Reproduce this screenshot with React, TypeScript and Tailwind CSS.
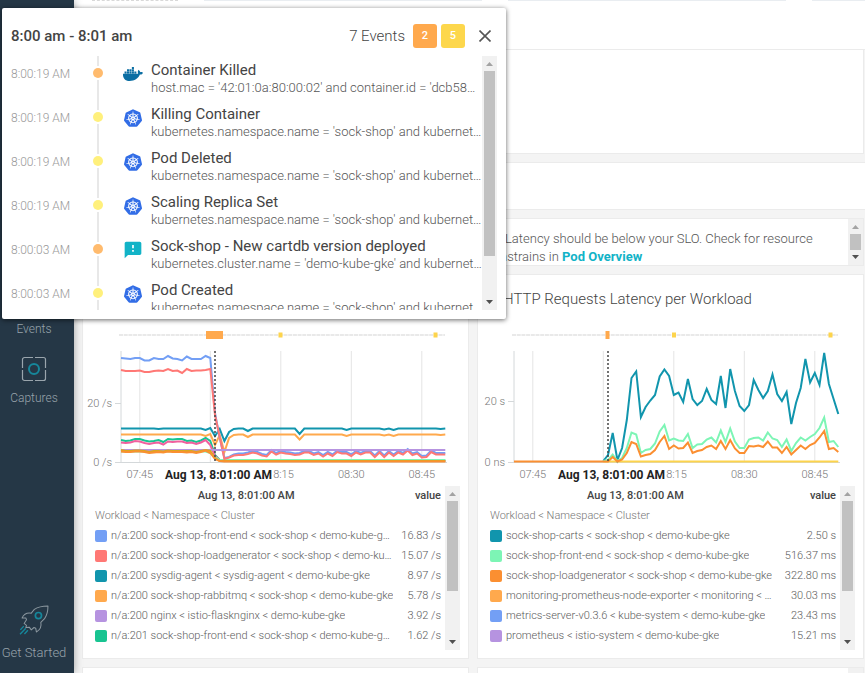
import clsx from "clsx"
import type { ReactNode } from "react"
import { FaDocker } from "react-icons/fa"
import { MdFeedback } from "react-icons/md"
import { SiKubernetes } from "react-icons/si"

type EventItem = {
  time: string
  severity: "high" | "medium"
  source: "docker" | "kubernetes" | "custom"
  title: string
  scope: string
}

type Series = { color: string; points: number[]; start?: number }

type LegendRow = { color: string; name: string; value: string }

const K8S_SCOPE = "kubernetes.namespace.name = 'sock-shop' and kubernet…"

const events: EventItem[] = [
  {
    time: "8:00:19 AM",
    severity: "high",
    source: "docker",
    title: "Container Killed",
    scope: "host.mac = '42:01:0a:80:00:02' and container.id = 'dcb58…",
  },
  { time: "8:00:19 AM", severity: "medium", source: "kubernetes", title: "Killing Container", scope: K8S_SCOPE },
  { time: "8:00:19 AM", severity: "medium", source: "kubernetes", title: "Pod Deleted", scope: K8S_SCOPE },
  { time: "8:00:19 AM", severity: "medium", source: "kubernetes", title: "Scaling Replica Set", scope: K8S_SCOPE },
  {
    time: "8:00:03 AM",
    severity: "high",
    source: "custom",
    title: "Sock-shop - New cartdb version deployed",
    scope: "kubernetes.cluster.name = 'demo-kube-gke' and kubernet…",
  },
  { time: "8:00:03 AM", severity: "medium", source: "kubernetes", title: "Pod Created", scope: K8S_SCOPE },
]

const flat = (value: number, count: number): number[] => Array(count).fill(value)

const tail = [
  130, 130, 129, 127.5, 128.5, 130.5, 131.5, 126.5, 129.5, 127.5, 128.5, 129, 130, 129.5, 127.5,
  127.5, 130, 128.5, 131.5, 128.5, 131, 127, 128.5, 128.5, 131, 127.5, 129.5, 127.5, 127.5, 132,
  127.5, 132, 127.5, 131, 127.5, 129.5, 125.5, 130, 128.5, 132.5, 132, 127, 129.5, 129.5, 129.5,
]

const dips = (base: number, values: Record<number, number>) =>
  flat(base, 70).map((v, i) => values[i] ?? v)

const requestSeries: Series[] = [
  {
    color: "#18c491",
    points: [
      115, 116, 115.5, 114, 114, 115.5, 116.5, 116, 115, 117, 114, 114.5, 114, 114, 116, 115.5, 117,
      115.5, 113, 116, 130, 135, ...flat(135.5, 21), 135, ...flat(135.5, 26),
    ],
  },
  {
    color: "#f0609e",
    points: [
      117.5, 118, 117.5, 116, 116.5, 118, 119, 118, 117.5, 119.5, 116.5, 117, 116.5, 116.5, 118,
      117.5, 119, 117.5, 115, 120, 131, 135, ...flat(136, 48),
    ],
  },
  {
    color: "#7df5b5",
    points: [...flat(126.5, 19), 128, 132, 135, ...flat(135, 48)],
  },
  {
    color: "#ffa94d",
    points: dips(109.5, { 18: 111, 19: 109, 20: 120, 21: 110, 22: 127, 23: 113, 24: 110, 27: 112, 38: 114.5, 48: 111, 56: 110.5, 58: 111, 68: 110 }),
  },
  {
    color: "#1195ad",
    points: dips(103.5, { 8: 104, 18: 105, 19: 103, 20: 111, 21: 104, 22: 116, 23: 107, 24: 104, 27: 106, 38: 109, 48: 105, 56: 104.5, 58: 105, 68: 104 }),
  },
  {
    color: "#739ff5",
    points: [
      33, 33.5, 34, 33, 33, 35.5, 35.5, 33, 34, 34, 31, 33.5, 34, 35.5, 31.5, 34, 34, 34, 31, 33, 88,
      113, 133, 132, 129.5, ...tail.map((v) => v - 1.5),
    ],
  },
  {
    color: "#ff7875",
    points: [
      45, 46, 46, 46, 45.5, 47, 47, 46, 45.5, 46, 44, 46, 45.5, 48, 44, 46, 45.5, 45.5, 45, 44, 90,
      112, 134, 132.5, 130.5, ...tail,
    ],
  },
  { color: "#b693e0", points: flat(125, 70) },
  {
    color: "#d9a81f",
    points: [
      125, 126, 126, 125.5, 125.5, 126, 127, 126, 126, 126.5, 125.5, 126, 126, 126, 126, 126, 127,
      126, 125, 126, 133, 136, ...flat(136, 48),
    ],
  },
  {
    color: "#fb8f31",
    points: [
      126.5, 127, 127, 126.5, 126.5, 127, 128, 127.5, 127, 127.5, 126.5, 127, 127, 127, 127.5, 127,
      128, 127, 125.5, 128, 134, 136, ...flat(136.5, 48),
    ],
  },
]

const latencySeries: Series[] = [
  { color: "#fdd44c", start: 19, points: flat(136.5, 51) },
  {
    color: "#1195ad",
    start: 19,
    points: [
      136, 130, 108, 135, 123, 95, 53, 46.5, 92, 82, 75.5, 70, 51.5, 44.5, 51, 70, 67.5, 77, 54, 74,
      80, 76, 64, 75, 79, 51, 83, 44, 66, 81, 86, 80, 55, 65, 73, 66, 49.5, 69, 76, 67, 99, 78, 63,
      34, 57.5, 48, 60, 28, 59, 74, 89,
    ],
  },
  {
    color: "#7df5b5",
    start: 19,
    points: [
      136, 135, 129.5, 136, 133, 123, 107.5, 109.5, 128, 125, 124, 118.5, 106.5, 100, 115.5, 113.5,
      115.5, 116, 109, 123, 119.5, 119, 114.5, 112.5, 117.5, 105.5, 117, 103.5, 116.5, 123, 123,
      114.5, 113, 112.5, 115.5, 107.5, 113.5, 115, 122, 114.5, 126, 118, 112.5, 115.5, 112, 109,
      103, 92.5, 117, 116, 122,
    ],
  },
  {
    color: "#fb8f31",
    points: [
      ...flat(136.5, 21), 132, 136.5, 134.5, 128, 117, 119, 131.5, 130, 129, 125, 117, 111, 124,
      120.5, 123.5, 123, 117.5, 128, 126, 125, 122, 120.5, 124, 116, 124, 115, 123.5, 128, 128, 121,
      121.5, 120.5, 122, 116.5, 122.5, 122.5, 128, 122, 129.5, 125, 120.5, 124, 120, 118, 112.5,
      106, 124, 123, 127,
    ],
  },
]

const requestLegend: LegendRow[] = [
  { color: "bg-[#739ff5]", name: "n/a:200 sock-shop-front-end < sock-shop < demo-kube-g…", value: "16.83 /s" },
  { color: "bg-[#ff7875]", name: "n/a:200 sock-shop-loadgenerator < sock-shop < demo-ku…", value: "15.07 /s" },
  { color: "bg-[#1195ad]", name: "n/a:200 sysdig-agent < sysdig-agent < demo-kube-gke", value: "8.97 /s" },
  { color: "bg-[#ffa94d]", name: "n/a:200 sock-shop-rabbitmq < sock-shop < demo-kube-gke", value: "5.78 /s" },
  { color: "bg-[#b693e0]", name: "n/a:200 nginx < istio-flasknginx < demo-kube-gke", value: "3.92 /s" },
  { color: "bg-[#18c491]", name: "n/a:201 sock-shop-front-end < sock-shop < demo-kube-g…", value: "1.62 /s" },
]

const latencyLegend: LegendRow[] = [
  { color: "bg-[#1195ad]", name: "sock-shop-carts < sock-shop < demo-kube-gke", value: "2.50 s" },
  { color: "bg-[#7df5b5]", name: "sock-shop-front-end < sock-shop < demo-kube-gke", value: "516.37 ms" },
  { color: "bg-[#fb8f31]", name: "sock-shop-loadgenerator < sock-shop < demo-kube-gke", value: "322.80 ms" },
  { color: "bg-[#ffa94d]", name: "monitoring-prometheus-node-exporter < monitoring < …", value: "30.03 ms" },
  { color: "bg-[#739ff5]", name: "metrics-server-v0.3.6 < kube-system < demo-kube-gke", value: "23.43 ms" },
  { color: "bg-[#b693e0]", name: "prometheus < istio-system < demo-kube-gke", value: "15.21 ms" },
]

function ScrollBar({ thumb }: { thumb: string }) {
  return (
    <div aria-hidden className="flex w-[15px] shrink-0 flex-col items-center bg-[#f1f1f1]">
      <svg viewBox="0 0 15 15" className="size-[15px] shrink-0">
        <path d="M4 10h7L7.5 6z" fill="#a3a3a3" />
      </svg>
      <div className={clsx("w-[11px] shrink-0 bg-[#c1c1c1]", thumb)} />
      <svg viewBox="0 0 15 15" className="mt-auto size-[15px] shrink-0">
        <path d="M4 5h7L7.5 9z" fill="#505050" />
      </svg>
    </div>
  )
}

function CapturesIcon() {
  return (
    <svg viewBox="0 0 26 26" className="size-[26px]" fill="none" strokeWidth="1.2">
      <path
        d="M12 1.5H3.5a2 2 0 0 0-2 2V12M14 1.5h8.5a2 2 0 0 1 2 2V12M24.5 14v8.5a2 2 0 0 1-2 2H14M12 24.5H3.5a2 2 0 0 1-2-2V14"
        stroke="#9aa5ad"
      />
      <circle cx="13" cy="13" r="5" stroke="#16879b" strokeWidth="2" />
    </svg>
  )
}

function RocketIcon() {
  return (
    <svg viewBox="0 0 88 88" className="mb-[2px] size-[30px]" fill="none" strokeWidth="3" strokeLinejoin="round">
      <path
        d="M85 3C68 3 55 6 45 13L36 24C24 22 14 27 9 38L20 38L22 43L15 54L22 60L20 66L30 65L36 73L44 66L49 68L51 79C62 73 67 65 64 51L75 40C82 30 85 17 85 3Z"
        stroke="#8b979f"
      />
      <circle cx="57" cy="31" r="9" stroke="#16879b" strokeWidth="5" />
      <path d="M14 62L4 73M20 68L3 86M26 74L16 85" stroke="#16879b" strokeWidth="4" />
    </svg>
  )
}

function NavItem({ icon, label, large }: { icon?: ReactNode; label: string; large?: boolean }) {
  return (
    <a
      href="#"
      className="flex flex-col items-center gap-2 font-light whitespace-nowrap text-[#98a3ab]"
    >
      {icon}
      <span className={clsx("leading-4", large ? "text-[13px]" : "text-[12px]")}>{label}</span>
    </a>
  )
}

function Sidebar() {
  return (
    <nav className="z-10 flex w-[74px] shrink-0 flex-col gap-[19px] bg-[#253746] pt-[321px] pr-[6px] pb-3 shadow-[0_0_8px_rgba(0,0,0,0.35)]">
      <NavItem label="Events" />
      <NavItem icon={<CapturesIcon />} label="Captures" />
      <div className="mt-auto">
        <NavItem icon={<RocketIcon />} label="Get Started" large />
      </div>
    </nav>
  )
}

type ChartProps = {
  label: string
  left: number
  ticks: { y: number; text: string }[]
  series: Series[]
  highlight: { x: number; width: number }
  markers: number[]
}

// horizontal distance of one minute
const STEP = 4.7

function Chart({ label, left, ticks, series, highlight, markers }: ChartProps) {
  const right = left + 326
  const at = (minute: number) => left + minute * STEP

  return (
    <svg viewBox="0 0 385 161" className="block w-full font-light" role="img" aria-label={label}>
      {/* event strip */}
      <path d={`M${left - 2} 10H${right - 2}`} stroke="#e9e9e9" strokeWidth="2" strokeDasharray="4 0.7" />
      <rect x={highlight.x} y="6" width={highlight.width} height="8" fill="#ffa94d" />
      {markers.map((x) => (
        <rect key={x} x={x} y="7.5" width="4" height="5" fill="#fdd44c" />
      ))}

      {/* grid and axes */}
      {[4, 19, 34, 49, 64].map((minute) => (
        <path key={minute} d={`M${at(minute)} 26V137`} stroke="#e4e4e4" />
      ))}
      <path d={`M${left} 26V137.5H${right}`} fill="none" stroke="#d4d8da" />
      {ticks.map((tick) => (
        <g key={tick.text}>
          <path d={`M${left - 6} ${tick.y}H${left}`} stroke="#d4d8da" />
          <text x={left - 9} y={tick.y + 3} textAnchor="end" fontSize="11" fill="#777">
            {tick.text}
          </text>
        </g>
      ))}
      <text x={at(4)} y="153" textAnchor="middle" fontSize="11" fill="#777">
        07:45
      </text>
      {/* the cursor label hides the hour's first digit */}
      <text x={at(34) + 13} y="153" textAnchor="end" fontSize="11" fill="#777">
        8:15
      </text>
      <text x={at(49)} y="153" textAnchor="middle" fontSize="11" fill="#777">
        08:30
      </text>
      <text x={at(64)} y="153" textAnchor="middle" fontSize="11" fill="#777">
        08:45
      </text>

      {series.map((s, i) => (
        <polyline
          key={i}
          points={s.points.map((y, n) => `${at((s.start ?? 0) + n)},${y}`).join(" ")}
          fill="none"
          stroke={s.color}
          strokeWidth="2"
        />
      ))}

      {/* cursor */}
      <path d={`M${at(20)} 26V137`} stroke="#444" strokeWidth="1.5" strokeDasharray="2 2" />
      <text x={at(20) - 50} y="154" fontSize="12" fontWeight="700" fill="#222">
        Aug 13, 8:01:00 AM
      </text>
    </svg>
  )
}

function Legend({ rows }: { rows: LegendRow[] }) {
  return (
    <div className="flex pr-2 pb-2 pl-3">
      <div className="min-w-0 flex-1 pb-1">
        <table className="w-full border-collapse text-[11px] leading-5 text-[#5c5c5c]">
          <thead>
            <tr className="text-[#444]">
              <th className="h-5 w-full p-0 text-center font-medium">Aug 13, 8:01:00 AM</th>
              <th className="h-5 p-0 pr-1 text-right font-medium">value</th>
            </tr>
          </thead>
          <tbody className="font-light">
            <tr>
              <td colSpan={2} className="h-5 p-0 text-[#777]">
                Workload &lt; Namespace &lt; Cluster
              </td>
            </tr>
            {rows.map((row) => (
              <tr key={row.name}>
                <td className="h-5 w-full max-w-0 p-0">
                  <div className="flex items-center gap-1">
                    <span className={clsx("size-3 shrink-0 rounded-xs", row.color)} />
                    <span className="truncate">{row.name}</span>
                  </div>
                </td>
                <td className="h-5 p-0 pr-1 pl-1 text-right whitespace-nowrap">{row.value}</td>
              </tr>
            ))}
          </tbody>
        </table>
      </div>
      <ScrollBar thumb="h-[90px]" />
    </div>
  )
}

function Card({ className, children }: { className?: string; children?: ReactNode }) {
  return <section className={clsx("min-w-0 border border-[#ebebeb] bg-white", className)}>{children}</section>
}

const severityDot = { high: "bg-[#ffbb6e]", medium: "bg-[#fff07c]" }

const sourceIcon = {
  docker: <FaDocker className="size-5 text-[#0b6ea3]" />,
  kubernetes: <SiKubernetes className="size-[18px] text-[#326de6]" />,
  custom: <MdFeedback className="size-5 text-[#12b3c7]" />,
}

function EventRow({ event }: { event: EventItem }) {
  return (
    <li className="flex h-11">
      <time className="w-20 shrink-0 pt-2 text-xs leading-5 font-light text-[#999]">{event.time}</time>
      <div className="flex w-[14px] shrink-0 flex-col items-center gap-[2px]">
        <span className="h-[10px] w-[2px] bg-[#e8e8e8]" />
        <span className={clsx("size-[10px] shrink-0 rounded-full", severityDot[event.severity])} />
        <span className="w-[2px] flex-1 bg-[#e8e8e8]" />
      </div>
      <div className="flex h-9 w-14 shrink-0 items-center justify-center">{sourceIcon[event.source]}</div>
      <div className="-ml-[10px] min-w-0 flex-1 pt-[5px] leading-[18px]">
        <div className="truncate text-[15px] text-[#444]">{event.title}</div>
        <div className="truncate text-[13px] font-light text-[#555]">{event.scope}</div>
      </div>
    </li>
  )
}

function EventsPopover() {
  return (
    <div
      role="dialog"
      aria-label="Events from 8:00 am to 8:01 am"
      className="absolute top-2 left-[2px] z-20 w-[504px] rounded-xs bg-white px-[9px] pb-[9px] shadow-[0_1px_5px_rgba(0,0,0,0.6)]"
    >
      <header className="flex h-12 items-center pt-2 text-[15px] text-[#444]">
        <h2 className="mr-auto font-medium">8:00 am - 8:01 am</h2>
        <span className="mr-2 font-light">7 Events</span>
        <span className="mr-1 flex size-6 items-center justify-center rounded-[3px] bg-[#ffa94d] text-[11px] font-medium text-white">
          2
        </span>
        <span className="flex size-6 items-center justify-center rounded-[3px] bg-[#fdd74c] text-[11px] font-medium text-white">
          5
        </span>
        <button type="button" aria-label="Close" className="mr-1 ml-3 flex size-4 items-center justify-center">
          <svg viewBox="0 0 12 12" className="size-3" stroke="#555" strokeWidth="1.6">
            <path d="M.5.5l11 11M11.5.5l-11 11" />
          </svg>
        </button>
      </header>
      <div className="flex h-[254px]">
        <ul className="min-w-0 flex-1 overflow-hidden">
          {events.map((event, i) => (
            <EventRow key={i} event={event} />
          ))}
        </ul>
        <ScrollBar thumb="h-[185px]" />
      </div>
    </div>
  )
}

export default function App() {
  return (
    <div className="relative flex h-screen overflow-hidden bg-[#f4f4f4] font-[Roboto,sans-serif]">
      <Sidebar />

      <main className="flex min-w-0 flex-1 flex-col">
        <header className="flex h-[50px] shrink-0 items-start gap-[26px] border-b border-[#ebebeb] bg-white pl-[18px]">
          <div className="w-[86px] border-t border-dashed border-[#d8d8d8]" />
          <div className="h-px flex-1 bg-[#e9edf1]" />
          <div className="h-px flex-1 bg-[#e9edf1]" />
          <div className="h-px w-[53px] bg-[#e9edf1]" />
        </header>

        <div className="flex flex-1 flex-col gap-2 pr-px pl-2">
          <Card className="h-[104px] shrink-0 border-t-0" />
          <Card className="-mr-px h-12 shrink-0 border-r-0" />

          <div className="grid shrink-0 grid-cols-2 gap-2">
            <Card className="h-12" />
            <Card className="flex h-12 overflow-hidden">
              <p className="flex-1 pt-[11px] pl-2 text-[13px] leading-[18px] font-light text-[#555]">
                <span className="inline-block w-[19px]" />
                Latency should be below your SLO. Check for resource constrains in{" "}
                <a href="#" className="font-bold text-[#12b3c7]">
                  Pod Overview
                </a>
              </p>
              <ScrollBar thumb="h-4" />
            </Card>
          </div>

          <div className="grid shrink-0 grid-cols-2 gap-2">
            <Card>
              <div className="h-[50px]" />
              <Chart
                label="HTTP requests per workload"
                left={38}
                ticks={[
                  { y: 78.5, text: "20 /s" },
                  { y: 137.5, text: "0 /s" },
                ]}
                series={requestSeries}
                highlight={{ x: 123, width: 17 }}
                markers={[195.5, 350.5]}
              />
              <Legend rows={requestLegend} />
            </Card>
            <Card>
              <h3 className="h-[50px] pl-[25px] text-[15px] leading-[48px] font-light text-[#444]">
                HTTP Requests Latency per Workload
              </h3>
              <Chart
                label="HTTP requests latency per workload"
                left={36}
                ticks={[
                  { y: 76.5, text: "20 s" },
                  { y: 137.5, text: "0 ns" },
                ]}
                series={latencySeries}
                highlight={{ x: 127.5, width: 4 }}
                markers={[194, 350.5]}
              />
              <Legend rows={latencyLegend} />
            </Card>
          </div>

          <div className="grid flex-1 grid-cols-2 gap-2">
            <Card className="border-b-0" />
            <Card className="flex justify-end border-b-0">
              <div className="w-[15px] bg-[#f1f1f1]" />
            </Card>
          </div>
        </div>
      </main>

      <EventsPopover />
    </div>
  )
}
